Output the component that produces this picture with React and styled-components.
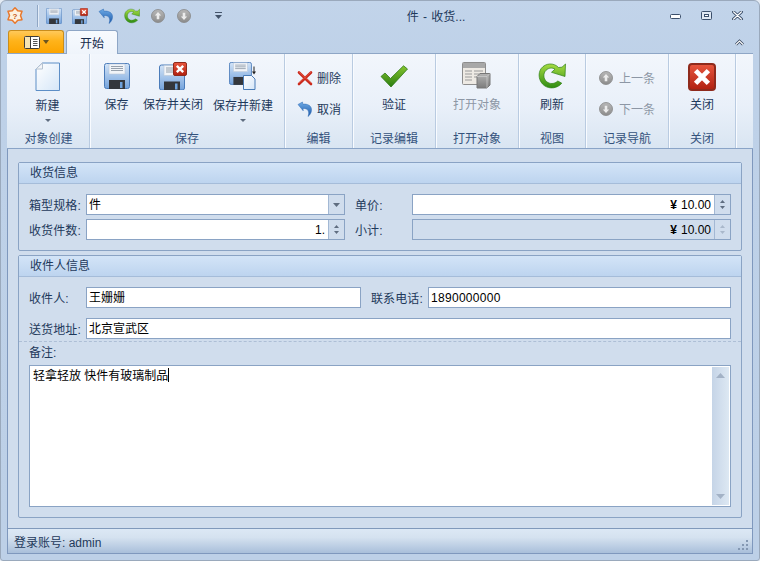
import styled, { createGlobalStyle } from 'styled-components'

const GlobalStyle = createGlobalStyle`
  html, body {
    margin: 0;
    padding: 0;
    width: 760px;
    height: 561px;
    overflow: hidden;
    background: #e4ebf4;
  }
`

const Window = styled.div`
  box-sizing: border-box;
  width: 760px;
  height: 561px;
  display: flex;
  flex-direction: column;
  border: 1px solid #9aa9bc;
  border-radius: 6px 6px 3px 3px;
  background: linear-gradient(to bottom, #c2d4ea 0, #bed1e8 60px, #bdd0e7 100%);
  font-family: 'Liberation Sans', 'Noto Sans CJK SC', sans-serif;
  font-size: 12px;
  color: #1e395b;
`

const TitleBar = styled.div`
  height: 29px;
  display: flex;
  align-items: center;
  padding-left: 6px;
`

const QuickBar = styled.div`
  display: flex;
  align-items: center;
  gap: 10px;
`

const QuickSeparator = styled.div`
  width: 1px;
  height: 22px;
  margin: 0 -2px 0 4px;
  background: #8fa6c4;
  box-shadow: 1px 0 0 #e3ecf7;
`

const AppGlyph = styled.div`
  display: flex;
`

const QuickBall = styled.div`
  width: 16px;
  display: flex;
  justify-content: center;
`

const QuickMore = styled.div`
  display: flex;
  margin-left: 13px;
`

const Title = styled.div`
  flex: 1;
  text-align: center;
  padding-right: 10px;
  word-spacing: 1px;
`

const WindowControls = styled.div`
  display: flex;
  width: 93px;
  margin-right: 6px;
`

const ControlButton = styled.div`
  width: 31px;
  display: flex;
  justify-content: center;
`

const TabRow = styled.div`
  height: 24px;
  display: flex;
  align-items: flex-start;
  padding-left: 7px;
  gap: 2px;
  position: relative;
  z-index: 1;
  margin-bottom: -1px;
`

const AppMenuButton = styled.div`
  box-sizing: border-box;
  width: 56px;
  height: 23px;
  display: flex;
  align-items: center;
  justify-content: center;
  gap: 3px;
  border: 1px solid #c98d1c;
  border-bottom: none;
  border-radius: 3px 3px 0 0;
  background: linear-gradient(to bottom, #ffc95a 0, #ffb31a 45%, #fca400 100%);
`

const Tab = styled.div`
  box-sizing: border-box;
  width: 52px;
  height: 24px;
  display: flex;
  align-items: center;
  justify-content: center;
  border: 1px solid #8ea6c6;
  border-bottom: none;
  border-radius: 3px 3px 0 0;
  background: linear-gradient(to bottom, #f7fafe, #eff4fb);
  color: #15294a;
`

const Collapse = styled.div`
  display: flex;
  margin-left: auto;
  margin-right: 15px;
  align-self: center;
`

const Main = styled.div`
  flex: 1;
  min-height: 0;
  display: flex;
  flex-direction: column;
  margin: 0 6px 6px;
  border: 1px solid #7f98bd;
  border-top: none;
`

const Ribbon = styled.div`
  box-sizing: border-box;
  height: 96px;
  display: flex;
  margin: 0 -1px;
  padding: 0 1px;
  border-top: 1px solid #8ea6c6;
  border-bottom: 1px solid #8aa4c7;
  background: linear-gradient(to bottom, #f2f6fc 0, #e9f0f9 55%, #d9e5f2 100%);
`

const Group = styled.div`
  box-sizing: border-box;
  width: ${p => p.$width}px;
  display: flex;
  flex-direction: column;
  border-right: 1px solid #b9cbe1;
  box-shadow: 1px 0 0 #f8fbff;
`

const GroupBody = styled.div`
  flex: 1;
  display: flex;
  justify-content: ${p => p.$align || 'center'};
  gap: 10px;
  padding-left: ${p => p.$inset || 0}px;
  padding-right: ${p => p.$insetRight || 0}px;
`

const GroupCaption = styled.div`
  height: 19px;
  line-height: 20px;
  text-align: center;
  color: #34527c;
`

const LargeButton = styled.div`
  width: ${p => p.$width}px;
  display: flex;
  flex-direction: column;
  align-items: center;
  padding-top: ${p => p.$top ?? 8}px;
  color: ${p => (p.$disabled ? '#8d97a5' : '#1e395b')};
`

const LargeLabel = styled.div`
  height: 16px;
  line-height: 16px;
  margin-top: ${p => p.$gap ?? 6}px;
  white-space: nowrap;
`

const DropMark = styled.div`
  display: flex;
  margin-top: 5px;
`

const SmallStack = styled.div`
  display: flex;
  flex-direction: column;
  gap: 14px;
  padding: 15px 0 0 ${p => p.$inset}px;
  width: 100%;
`

const SmallButton = styled.div`
  height: 17px;
  display: flex;
  align-items: center;
  gap: ${p => p.$gap || 4}px;
  color: ${p => (p.$disabled ? '#8d97a5' : '#1e395b')};
`

const Content = styled.div`
  flex: 1;
  min-height: 0;
  display: flex;
  flex-direction: column;
  gap: 4px;
  padding: 13px 10px 10px 10px;
  background: #d0dded;
`

const Panel = styled.section`
  box-sizing: border-box;
  height: ${p => p.$height}px;
  display: flex;
  flex-direction: column;
  border: 1px solid #8aa3c4;
  border-radius: 2px;
`

const PanelHeader = styled.div`
  box-sizing: border-box;
  height: 21px;
  line-height: 20px;
  padding-left: 11px;
  border-bottom: 1px solid #a5bcd9;
  background: linear-gradient(to bottom, #d3e4f7, #bdd4ef);
`

const FormGrid = styled.div`
  display: grid;
  grid-template-columns: ${p => p.$columns};
  grid-auto-rows: 21px;
  row-gap: ${p => p.$rowGap}px;
  padding: ${p => p.$top}px 10px 0;
`

const Label = styled.div`
  display: flex;
  align-items: center;
  padding-left: ${p => p.$inset || 0}px;
  letter-spacing: 0.1px;
`

const Field = styled.div`
  box-sizing: border-box;
  display: flex;
  align-items: stretch;
  grid-column: ${p => p.$span || 'auto'};
  border: 1px solid #8aa3c4;
  background: ${p => (p.$disabled ? 'transparent' : '#fff')};
  color: #000;
`

const FieldValue = styled.div`
  flex: 1;
  line-height: 19px;
  padding: 1px 3px 0 2px;
  text-align: ${p => (p.$right ? 'right' : 'left')};
  letter-spacing: ${p => p.$spacing || 0}px;
`

const Yen = styled.span`
  font-weight: bold;
  margin-right: 4px;
`

const SideButton = styled.div`
  width: 15px;
  display: flex;
  flex-direction: column;
  align-items: center;
  justify-content: center;
  gap: ${p => p.$gap || 0}px;
  border-left: 1px solid #a3b8d4;
  background: #d0dded;
`

const DashedRule = styled.div`
  margin-top: 2px;
  border-top: 1px dashed #aebfd6;
`

const NotesLabel = styled.div`
  height: 23px;
  line-height: 22px;
  padding-left: 10px;
`

const NotesBox = styled.div`
  box-sizing: border-box;
  height: 142px;
  margin: 0 10px;
  padding: 1px;
  display: flex;
  border: 1px solid #8aa3c4;
  background: #fff;
  color: #000;
`

const NotesText = styled.div`
  flex: 1;
  padding: 1px 2px;
  line-height: 15px;
`

const Caret = styled.span`
  display: inline-block;
  width: 1px;
  height: 14px;
  vertical-align: -2px;
  background: #000;
`

const ScrollTrack = styled.div`
  width: 17px;
  display: flex;
  flex-direction: column;
  justify-content: space-between;
  align-items: center;
  padding: 6px 0;
  box-sizing: border-box;
  background: linear-gradient(to right, #c5d4e7, #dde8f3);
`

const StatusBar = styled.div`
  box-sizing: border-box;
  height: 25px;
  display: flex;
  align-items: center;
  justify-content: space-between;
  padding: 0 3px 0 6px;
  border-top: 1px solid #8099bb;
  background: linear-gradient(to bottom, #dce8f5 0, #d5e2f0 35%, #a9bfda 100%);
`

const Grip = styled.div`
  display: flex;
  align-self: flex-end;
  padding-bottom: 2px;
`

const IconDefs = () => (
  <svg width="0" height="0" style={{ display: 'block' }}>
    <defs>
      <linearGradient id="floppy" x1="0" y1="0" x2="0" y2="1">
        <stop offset="0" stopColor="#d3e4f7" />
        <stop offset="1" stopColor="#74a3dc" />
      </linearGradient>
      <linearGradient id="sheet" x1="0" y1="0" x2="1" y2="1">
        <stop offset="0" stopColor="#ffffff" />
        <stop offset="1" stopColor="#d5e6f8" />
      </linearGradient>
      <linearGradient id="redBox" x1="0" y1="0" x2="0" y2="1">
        <stop offset="0" stopColor="#e8573f" />
        <stop offset="1" stopColor="#b0200f" />
      </linearGradient>
      <linearGradient id="greenArc" x1="0" y1="0" x2="0" y2="1">
        <stop offset="0" stopColor="#a6dc42" />
        <stop offset="1" stopColor="#2e8c12" />
      </linearGradient>
      <linearGradient id="greenCheck" x1="0" y1="0" x2="0" y2="1">
        <stop offset="0" stopColor="#86c52f" />
        <stop offset="1" stopColor="#2a7d10" />
      </linearGradient>
      <linearGradient id="blueArrow" x1="0" y1="0" x2="0" y2="1">
        <stop offset="0" stopColor="#6fabe6" />
        <stop offset="1" stopColor="#1a57a8" />
      </linearGradient>
      <linearGradient id="grayBall" x1="0" y1="0" x2="0" y2="1">
        <stop offset="0" stopColor="#b8b8b8" />
        <stop offset="1" stopColor="#8c8c8c" />
      </linearGradient>
      <linearGradient id="grayCube" x1="0" y1="0" x2="0" y2="1">
        <stop offset="0" stopColor="#b4b4b4" />
        <stop offset="1" stopColor="#7c7c7c" />
      </linearGradient>
    </defs>
  </svg>
)

const FloppyShape = () => (
  <>
    <rect x="0.5" y="0.5" width="25" height="25" rx="2" fill="url(#floppy)" stroke="#4b7cba" />
    <rect x="5" y="1" width="16" height="10" fill="#f1f4f8" stroke="#b9c6d6" strokeWidth="0.6" />
    <path d="M7 3.5h12M7 5.5h12M7 7.5h12" stroke="#8c97a4" strokeWidth="0.9" />
    <rect x="5" y="17" width="16" height="9" fill="#34373c" />
    <rect x="16" y="19" width="2.5" height="6" fill="#6ea2dc" />
  </>
)

const FloppyIcon = ({ size = 26 }) => (
  <svg width={size} height={size} viewBox="0 0 26 26">
    <FloppyShape />
  </svg>
)

const CrossBadge = ({ x, y, s = 14 }) => (
  <g transform={`translate(${x} ${y}) scale(${s / 14})`}>
    <rect x="0.5" y="0.5" width="13" height="13" rx="1.5" fill="url(#redBox)" stroke="#8f2a1c" />
    <path d="M3.8 3.8l6.4 6.4M10.2 3.8l-6.4 6.4" stroke="#fff" strokeWidth="2.4" />
  </g>
)

const FloppyCloseIcon = ({ size = 28 }) => (
  <svg width={size} height={size} viewBox="0 0 28 28">
    <g transform="translate(0 2.5)">
      <FloppyShape />
    </g>
    <CrossBadge x={14} y={0} />
  </svg>
)

const FloppyNewIcon = () => (
  <svg width="29" height="28" viewBox="0 0 29 28">
    <g transform="scale(0.88)">
      <FloppyShape />
    </g>
    <path d="M14.5 13.5h8l3.5 3.5v10.5h-11.5z" fill="url(#sheet)" stroke="#4a7db8" />
    <path d="M25 4.5v6" stroke="#222" strokeWidth="1" />
    <path d="M23 9.5h4l-2 3z" fill="#222" />
  </svg>
)

const NewDocIcon = () => (
  <svg width="26" height="30" viewBox="0 0 26 30">
    <path d="M7.5 1h17v27.5h-23.5V7z" fill="url(#sheet)" stroke="#5d8ec6" />
    <path d="M7.5 1v6h-6.500z" fill="#f4f6f9" stroke="#b5c2d0" />
  </svg>
)

const UndoIcon = ({ size = 16 }) => (
  <svg width={size} height={size} viewBox="0 0 16 16">
    <path
      d="M1 3.500 L5.500 1 L5.800 3.200 C10.500 2.600 14.800 4.700 14.500 9.200 C14.300 11.900 13 14 11 15.500 C11.800 13.500 12 11.500 11.200 9.800 C10.300 8 8.200 7.200 6 7.500 L6.200 9.800 Z"
      fill="url(#blueArrow)"
      stroke="#2c68b2"
      strokeWidth="0.5"
    />
  </svg>
)

const RefreshIcon = ({ size = 28 }) => (
  <svg width={size} height={size} viewBox="0 0 28 28">
    <path
      d="M20.500 5.500 C16 0.500 7.500 0.800 3.200 6.500 C-0.500 11.500 0.800 19.500 6.200 23.500 C11.500 27.400 19.500 26.500 23.800 21.200 L19.800 19 C16.500 22.200 11.500 22.300 8.500 19.500 C5.200 16.600 5 11.300 8 8.300 C10.800 5.600 14.500 5.500 17 7.200 L13.500 10.300 L27 14.500 L27.500 2 L24 5.200 Z"
      fill="url(#greenArc)"
      stroke="#2e7f14"
      strokeWidth="0.7"
    />
  </svg>
)

const CheckIcon = () => (
  <svg width="28" height="24" viewBox="0 0 28 24">
    <path
      d="M1 11.500 L5 8 L10.500 13.500 L23.500 0.800 L27.500 4 L11 22 Z"
      fill="url(#greenCheck)"
      stroke="#2f7a16"
      strokeWidth="0.8"
      strokeLinejoin="round"
    />
  </svg>
)

const TableObjectIcon = () => (
  <svg width="29" height="28" viewBox="0 0 29 28">
    <rect x="0.5" y="0.500" width="23" height="22" rx="1" fill="#eeeae4" stroke="#8d8d8d" />
    <rect x="1" y="1" width="22" height="5" fill="#a8a8a8" />
    <path d="M3 9h7M3 12h7M3 15h7M3 18h7M12 9h9M12 12h9M12 15h5" stroke="#9a9a9a" />
    <path d="M15 14.500 l3-3h10v11.500l-3 3h-10z" fill="url(#grayCube)" stroke="#777" />
    <path d="M15 14.500h10v11.500M25 14.500l3-3" fill="none" stroke="#cfcfcf" strokeWidth="0.7" />
  </svg>
)

const BallArrow = ({ size = 14, down }) => (
  <svg width={size} height={size} viewBox="0 0 14 14">
    <circle cx="7" cy="7" r="6.500" fill="url(#grayBall)" stroke="#858585" strokeWidth="0.800" />
    <g transform={down ? 'rotate(180 7 7)' : undefined}>
      <path d="M7 3 L10.200 6.500 H8.300 V10.300 H5.700 V6.500 H3.800 Z" fill="#ececec" />
    </g>
  </svg>
)

const CrossIcon = () => (
  <svg width="16" height="16" viewBox="0 0 16 16">
    <path d="M2 2.500l12 11.500M14 2.500l-12 11.500" stroke="#c9281b" strokeWidth="2.600" strokeLinecap="round" />
    <path d="M2 2l12 11M14 2l-12 11" stroke="#ea5a46" strokeWidth="0.800" strokeLinecap="round" />
  </svg>
)

const CloseBoxIcon = () => (
  <svg width="28" height="28" viewBox="0 0 14 14">
    <CrossBadge x={0} y={0} />
  </svg>
)

const AppIcon = () => (
  <svg width="16" height="17" viewBox="0 0 16 17">
    <path
      d="M8 0.800L10.750 3.740 15 4.250 13.500 8.500 15 12.750 10.750 13.260 8 16.200 5.250 13.260 1 12.750 2.500 8.500 1 4.250 5.250 3.740Z"
      fill="#fdf2e2"
      stroke="#e8782c"
      strokeWidth="1.500"
      strokeLinejoin="round"
    />
    <text x="8" y="11.800" fontSize="8" fontWeight="bold" textAnchor="middle" fill="#c5561a" fontFamily="Liberation Sans">?</text>
  </svg>
)

const BookIcon = () => (
  <svg width="16" height="13" viewBox="0 0 16 13">
    <rect x="0.500" y="0.500" width="15" height="12" rx="1" fill="#fff" stroke="#3c3c3c" />
    <rect x="1" y="1" width="5" height="11" fill="#f6e3b2" />
    <path d="M6.500 1v11" stroke="#3c3c3c" />
    <path d="M9 3.500h4.500M9 5.500h4.500M9 7.500h4.500M9 9.500h4.500" stroke="#555" />
  </svg>
)

const Triangle = ({ w = 7, h = 4, down = true, color = '#5f6d80' }) => (
  <svg width={w} height={h} viewBox={`0 0 ${w} ${h}`} style={{ display: 'block' }}>
    <path d={down ? `M0 0H${w}L${w / 2} ${h}Z` : `M0 ${h}H${w}L${w / 2} 0Z`} fill={color} />
  </svg>
)

const QuickMoreIcon = () => (
  <svg width="7" height="8" viewBox="0 0 7 8">
    <path d="M0 0.500h7" stroke="#44546a" />
    <path d="M0 3h7L3.500 7z" fill="#44546a" />
  </svg>
)

const MinimizeIcon = () => (
  <svg width="12" height="9" viewBox="0 0 12 9">
    <rect x="0.500" y="3.500" width="10" height="4" rx="1" fill="#fff" stroke="#3b4f6b" />
  </svg>
)

const MaximizeIcon = () => (
  <svg width="12" height="9" viewBox="0 0 12 9">
    <rect x="0.500" y="0.500" width="10" height="8" rx="1" fill="#dfe8f3" stroke="#3b4f6b" />
    <rect x="3.500" y="3.500" width="4" height="2" fill="#fff" stroke="#3b4f6b" />
  </svg>
)

const CloseWindowIcon = () => (
  <svg width="12" height="9" viewBox="0 0 12 9">
    <path d="M1.500 0.800l8 7.400M9.500 0.800l-8 7.400" stroke="#3b4f6b" strokeWidth="3" strokeLinecap="round" />
    <path d="M1.500 0.800l8 7.400M9.500 0.800l-8 7.400" stroke="#fff" strokeWidth="1.200" strokeLinecap="round" />
  </svg>
)

const ChevronUpIcon = () => (
  <svg width="9" height="7" viewBox="0 0 9 7">
    <path d="M1 5.500L4.500 2 8 5.500" fill="none" stroke="#2f3e55" strokeWidth="2.600" />
    <path d="M1 5.500L4.500 2 8 5.500" fill="none" stroke="#fff" strokeWidth="1.200" />
  </svg>
)

const GripIcon = () => (
  <svg width="11" height="11" viewBox="0 0 11 11" fill="#8498b3">
    <rect x="8" y="0" width="2" height="2" />
    <rect x="4" y="4" width="2" height="2" />
    <rect x="8" y="4" width="2" height="2" />
    <rect x="0" y="8" width="2" height="2" />
    <rect x="4" y="8" width="2" height="2" />
    <rect x="8" y="8" width="2" height="2" />
  </svg>
)

const Spinner = ({ color }) => (
  <SideButton $gap={3}>
    <Triangle w={5} h={3} down={false} color={color} />
    <Triangle w={5} h={3} color={color} />
  </SideButton>
)

export default function App() {
  return (
    <>
      <GlobalStyle />
      <Window>
        <IconDefs />
        <TitleBar>
          <QuickBar>
            <AppGlyph>
              <AppIcon />
            </AppGlyph>
            <QuickSeparator />
            <FloppyIcon size={16} />
            <FloppyCloseIcon size={16} />
            <UndoIcon />
            <RefreshIcon size={16} />
            <QuickBall>
              <BallArrow />
            </QuickBall>
            <QuickBall>
              <BallArrow down />
            </QuickBall>
            <QuickMore>
              <QuickMoreIcon />
            </QuickMore>
          </QuickBar>
          <Title>件 - 收货...</Title>
          <WindowControls>
            <ControlButton>
              <MinimizeIcon />
            </ControlButton>
            <ControlButton>
              <MaximizeIcon />
            </ControlButton>
            <ControlButton>
              <CloseWindowIcon />
            </ControlButton>
          </WindowControls>
        </TitleBar>

        <TabRow>
          <AppMenuButton>
            <BookIcon />
            <Triangle w={6} h={4} color="#6b5520" />
          </AppMenuButton>
          <Tab>开始</Tab>
          <Collapse>
            <ChevronUpIcon />
          </Collapse>
        </TabRow>

        <Main>
          <Ribbon>
            <Group $width={82}>
              <GroupBody $insetRight={2}>
                <LargeButton $top={8}>
                  <NewDocIcon />
                  <LargeLabel $gap={6}>新建</LargeLabel>
                  <DropMark>
                    <Triangle w={6} h={3} />
                  </DropMark>
                </LargeButton>
              </GroupBody>
              <GroupCaption>对象创建</GroupCaption>
            </Group>
            <Group $width={195}>
              <GroupBody $align="flex-start" $inset={10}>
                <LargeButton $width={33} $top={9}>
                  <FloppyIcon />
                  <LargeLabel $gap={8}>保存</LargeLabel>
                </LargeButton>
                <LargeButton $width={60} $top={8}>
                  <FloppyCloseIcon />
                  <LargeLabel $gap={7}>保存并关闭</LargeLabel>
                </LargeButton>
                <LargeButton $width={60} $top={8}>
                  <FloppyNewIcon />
                  <LargeLabel $gap={8}>保存并新建</LargeLabel>
                  <DropMark>
                    <Triangle w={6} h={3} />
                  </DropMark>
                </LargeButton>
              </GroupBody>
              <GroupCaption>保存</GroupCaption>
            </Group>
            <Group $width={68}>
              <GroupBody>
                <SmallStack $inset={12}>
                  <SmallButton>
                    <CrossIcon />
                    删除
                  </SmallButton>
                  <SmallButton>
                    <UndoIcon />
                    取消
                  </SmallButton>
                </SmallStack>
              </GroupBody>
              <GroupCaption>编辑</GroupCaption>
            </Group>
            <Group $width={83}>
              <GroupBody>
                <LargeButton $top={11}>
                  <CheckIcon />
                  <LargeLabel $gap={8}>验证</LargeLabel>
                </LargeButton>
              </GroupBody>
              <GroupCaption>记录编辑</GroupCaption>
            </Group>
            <Group $width={83}>
              <GroupBody>
                <LargeButton $top={8} $disabled>
                  <TableObjectIcon />
                  <LargeLabel $gap={7}>打开对象</LargeLabel>
                </LargeButton>
              </GroupBody>
              <GroupCaption>打开对象</GroupCaption>
            </Group>
            <Group $width={67}>
              <GroupBody>
                <LargeButton $top={8}>
                  <RefreshIcon />
                  <LargeLabel $gap={7}>刷新</LargeLabel>
                </LargeButton>
              </GroupBody>
              <GroupCaption>视图</GroupCaption>
            </Group>
            <Group $width={83}>
              <GroupBody>
                <SmallStack $inset={13}>
                  <SmallButton $disabled $gap={6}>
                    <BallArrow />
                    上一条
                  </SmallButton>
                  <SmallButton $disabled $gap={6}>
                    <BallArrow down />
                    下一条
                  </SmallButton>
                </SmallStack>
              </GroupBody>
              <GroupCaption>记录导航</GroupCaption>
            </Group>
            <Group $width={67}>
              <GroupBody>
                <LargeButton $top={9}>
                  <CloseBoxIcon />
                  <LargeLabel $gap={6}>关闭</LargeLabel>
                </LargeButton>
              </GroupBody>
              <GroupCaption>关闭</GroupCaption>
            </Group>
          </Ribbon>

          <Content>
            <Panel $height={89}>
              <PanelHeader>收货信息</PanelHeader>
              <FormGrid $columns="57px 259px 67px 319px" $rowGap={4} $top={10}>
                <Label>箱型规格:</Label>
                <Field>
                  <FieldValue>件</FieldValue>
                  <SideButton>
                    <Triangle w={7} h={4} />
                  </SideButton>
                </Field>
                <Label $inset={10}>单价:</Label>
                <Field>
                  <FieldValue $right>
                    <Yen>¥</Yen>10.00
                  </FieldValue>
                  <Spinner color="#5f6d80" />
                </Field>
                <Label>收货件数:</Label>
                <Field>
                  <FieldValue $right>1.</FieldValue>
                  <Spinner color="#5f6d80" />
                </Field>
                <Label $inset={10}>小计:</Label>
                <Field $disabled>
                  <FieldValue $right>
                    <Yen>¥</Yen>10.00
                  </FieldValue>
                  <Spinner color="#a9b8cb" />
                </Field>
              </FormGrid>
            </Panel>

            <Panel $height={263}>
              <PanelHeader>收件人信息</PanelHeader>
              <FormGrid $columns="57px 275px 67px 303px" $rowGap={10} $top={10}>
                <Label>收件人:</Label>
                <Field>
                  <FieldValue>王姗姗</FieldValue>
                </Field>
                <Label $inset={10}>联系电话:</Label>
                <Field>
                  <FieldValue $spacing={0.3}>1890000000</FieldValue>
                </Field>
                <Label>送货地址:</Label>
                <Field $span="2 / 5">
                  <FieldValue>北京宣武区</FieldValue>
                </Field>
              </FormGrid>
              <DashedRule />
              <NotesLabel>备注:</NotesLabel>
              <NotesBox>
                <NotesText>
                  轻拿轻放 快件有玻璃制品
                  <Caret />
                </NotesText>
                <ScrollTrack>
                  <Triangle w={9} h={5} down={false} color="#a3b2c6" />
                  <Triangle w={9} h={5} color="#a3b2c6" />
                </ScrollTrack>
              </NotesBox>
            </Panel>
          </Content>

          <StatusBar>
            <span>登录账号: admin</span>
            <Grip>
              <GripIcon />
            </Grip>
          </StatusBar>
        </Main>
      </Window>
    </>
  )
}
